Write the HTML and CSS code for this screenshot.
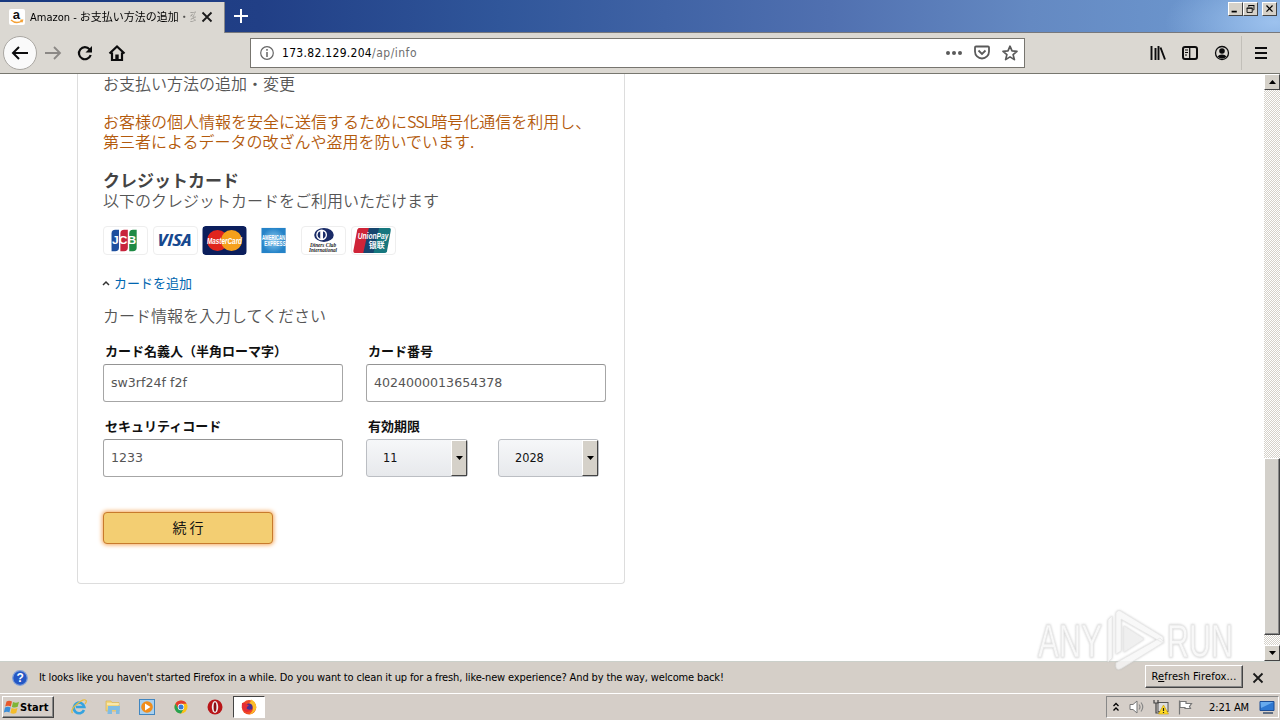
FILE: index.html
```html
<!DOCTYPE html>
<html lang="ja">
<head>
<meta charset="utf-8">
<title>Desktop</title>
<link rel="stylesheet" href="styles.css">
</head>
<body>
<div class="window">
  <header class="tabbar">
    <div class="tab">
      <svg class="fav" viewBox="0 0 16 16"><rect width="16" height="16" rx="2" fill="#fff"/><text x="3.8" y="9.8" font-size="13" font-weight="bold" font-family="Liberation Sans, sans-serif" fill="#111">a</text><path d="M2 11Q7 15.500 13 12M11.300 11.300l2.200-.1-.6 2" fill="none" stroke="#f4a135" stroke-width="1.400"/></svg>
      <span class="tab-title">Amazon - お支払い方法の追加・変</span>
      <svg class="tab-close" viewBox="0 0 12 12"><path d="M1.500 1.500l9 9M10.500 1.500l-9 9" stroke="#1a1a1a" stroke-width="1.800"/></svg>
    </div>
    <svg class="newtab" viewBox="0 0 16 16"><path d="M8 1v14M1 8h14" stroke="#fff" stroke-width="2"/></svg>
    <div class="controls">
      <svg class="ctl" viewBox="0 0 15 13"><path d="M3 9.500h6" stroke="#000" stroke-width="2"/></svg>
      <svg class="ctl" viewBox="0 0 15 13"><path d="M5.500 4V2.500h6v5H10M5 2.500h7M3.500 5.500h6v5h-6zM3 5.500h7" fill="none" stroke="#000"/></svg>
      <svg class="ctl ctl-close" viewBox="0 0 15 13"><path d="M4 2.500l7 7M11 2.500l-7 7" stroke="#000" stroke-width="1.500"/></svg>
    </div>
  </header>
  <nav class="toolbar">
    <div class="nav">
      <div class="back"><svg class="i18" viewBox="0 0 18 18"><path d="M17 9H2M8 3L2 9l6 6" fill="none" stroke="#0c0c0d" stroke-width="2"/></svg></div>
      <svg class="i18" viewBox="0 0 18 18"><path d="M1 9h15M10 3l6 6-6 6" fill="none" stroke="#8b8885" stroke-width="1.800"/></svg>
      <svg class="i18" viewBox="0 0 18 18"><path d="M13.600 5.400A6 6 0 1 0 14.700 11" fill="none" stroke="#0c0c0d" stroke-width="2.200"/><path d="M16 2v6.500H9.500z" fill="#0c0c0d"/></svg>
      <svg class="i18" viewBox="0 0 18 18"><path d="M1.500 9.500L9 2.500l7.500 7M4 8.500V16h10V8.500" fill="none" stroke="#0c0c0d" stroke-width="2.200"/><path d="M7.300 16v-5.500h3.400V16z" fill="#0c0c0d"/></svg>
    </div>
    <div class="url">
      <svg class="i14" viewBox="0 0 14 14"><circle cx="7" cy="7" r="6.300" fill="none" stroke="#666" stroke-width="1.200"/><path d="M7 6v5M7 3v1.700" stroke="#666" stroke-width="1.500"/></svg>
      <span class="addr">173.82.129.204<span class="path">/ap/info</span></span>
      <svg class="dots" viewBox="0 0 16 16"><g fill="#5a5a5a"><circle cx="2" cy="8" r="2"/><circle cx="8" cy="8" r="2"/><circle cx="14" cy="8" r="2"/></g></svg>
      <svg class="i16" viewBox="0 0 16 16"><path d="M2 1.500h12q1 0 1 1v4a7 7 0 0 1-14 0v-4q0-1 1-1z" fill="none" stroke="#5a5a5a" stroke-width="1.800"/><path d="M4.500 5.500L8 9l3.500-3.500" fill="none" stroke="#5a5a5a" stroke-width="1.800"/></svg>
      <svg class="i16" viewBox="0 0 16 16"><path d="M8 1.200l2 4.700 5 .4-3.900 3.300 1.300 5L8 11.900l-4.400 2.700 1.300-5L1 6.300l5-.4z" fill="none" stroke="#5a5a5a" stroke-width="1.700" stroke-linejoin="round"/></svg>
    </div>
    <div class="tools">
      <svg class="i16" viewBox="0 0 16 16"><path d="M1.500 1v14M5.500 3v12M8.500 1v14M10.500 2.500l4.500 12" stroke="#0c0c0d" stroke-width="1.900"/></svg>
      <svg class="i16" viewBox="0 0 16 16"><rect x="1" y="2" width="14" height="12" rx="2" fill="none" stroke="#0c0c0d" stroke-width="2"/><path d="M7.700 2v12" stroke="#0c0c0d" stroke-width="1.300"/><path d="M3 5h3M3 7.500h3M3 10h2" stroke="#0c0c0d"/></svg>
      <svg class="i16" viewBox="0 0 16 16"><circle cx="8" cy="8" r="6.500" fill="none" stroke="#0c0c0d" stroke-width="1.300"/><circle cx="8" cy="6" r="2.800" fill="#0c0c0d"/><path d="M3.500 11.500Q5 9.500 8 9.500t4.500 2Q11 13.500 8 13.500t-4.500-2z" fill="#0c0c0d"/></svg>
      <div class="menu"><svg class="i14" viewBox="0 0 14 14"><path d="M1 2h12M1 7h12M1 12h12" stroke="#0c0c0d" stroke-width="2"/></svg></div>
    </div>
  </nav>
  <div class="view">
    <main class="page">
      <section class="card">
        <div class="line">お支払い方法の追加・変更</div>
        <p class="secure">お客様の個人情報を安全に送信するために<span class="ssl">SSL</span>暗号化通信を利用し、<br>第三者によるデータの改ざんや盗用を防いでいます.</p>
        <h3 class="title">クレジットカード</h3>
        <div class="line">以下のクレジットカードをご利用いただけます</div>
        <div class="brands">
          <svg class="brand" viewBox="0 0 44 29"><path d="M7 7q0-4 4-4h4v19q0 4-4 4H7z" fill="#1d4f9e"/><path d="M16.500 7q0-4 4-4h4v19q0 4-4 4h-4z" fill="#c8243c"/><path d="M26 7q0-4 4-4h4v19q0 4-4 4h-4z" fill="#1e8a44"/><text x="7.500" y="18.500" textLength="26" lengthAdjust="spacingAndGlyphs" font-family="Liberation Sans, sans-serif" font-size="11" font-weight="bold" fill="#fff">JCB</text></svg>
          <svg class="brand" viewBox="0 0 44 29"><text x="2.500" y="20.500" textLength="37" lengthAdjust="spacingAndGlyphs" font-family="Open Sans, sans-serif" font-size="17" font-weight="bold" font-style="italic" fill="#17488f">VISA</text></svg>
          <svg class="brand" viewBox="0 0 44 29"><rect width="44" height="29" rx="3" fill="#0b1e5c"/><circle cx="15" cy="14.500" r="10.500" fill="#e0251e"/><circle cx="29" cy="14.500" r="10.500" fill="#f5a01c"/><text x="4.500" y="18" textLength="35" lengthAdjust="spacingAndGlyphs" font-family="Liberation Sans, sans-serif" font-size="9" font-weight="bold" font-style="italic" fill="#fff">MasterCard</text></svg>
          <svg class="brand plain" viewBox="0 0 44 29"><defs><radialGradient id="ax"><stop offset="0" stop-color="#8fcdf0"/><stop offset="1" stop-color="#2583c8"/></radialGradient></defs><rect x="8" y="1" width="26" height="27" fill="url(#ax)"/><g font-family="Liberation Sans, sans-serif" font-size="7" font-weight="bold" fill="#fff"><text x="8.500" y="13.500" textLength="25" lengthAdjust="spacingAndGlyphs">AMERICAN</text><text x="11" y="20" textLength="23" lengthAdjust="spacingAndGlyphs">EXPRESS</text></g></svg>
          <svg class="brand" viewBox="0 0 44 29"><ellipse cx="22.500" cy="8.500" rx="10.500" ry="7.500" fill="#1a2c68"/><circle cx="20" cy="8.500" r="5.800" fill="#fff"/><path d="M18.500 4.500v8a4.200 4.200 0 0 1 0-8M21.500 4.500v8a4.200 4.200 0 0 0 0-8" fill="#1a2c68"/><g font-family="Liberation Serif, serif" font-size="7.500" font-weight="bold" font-style="italic" fill="#222"><text x="7.500" y="21.500" textLength="28" lengthAdjust="spacingAndGlyphs">Diners Club</text><text x="6.500" y="26.800" textLength="30" lengthAdjust="spacingAndGlyphs" font-size="6">International</text></g></svg>
          <svg class="brand" viewBox="0 0 44 29"><path d="M6 1h12l-6 27H2q-2 0-1.500-3l4-22z" fill="#cf2438"/><path d="M17 1h12l-6 27H11z" fill="#17456e"/><path d="M28 1h11q2 0 1.500 3l-4 22q-.5 2-3 2H22z" fill="#16777e"/><text x="5" y="13" textLength="33" lengthAdjust="spacingAndGlyphs" font-family="Liberation Sans, sans-serif" font-size="9" font-weight="bold" font-style="italic" fill="#fff">UnionPay</text><text x="17" y="23" font-family="Noto Sans CJK SC, sans-serif" font-size="8.500" font-weight="bold" fill="#fff">银联</text></svg>
        </div>
        <div class="addcard"><svg class="caret" viewBox="0 0 8 6"><path d="M1 5l3-3 3 3" fill="none" stroke="#333" stroke-width="1.500"/></svg><span class="link">カードを追加</span></div>
        <div class="line prompt">カード情報を入力してください</div>
        <div class="fields">
          <div class="field"><div class="label">カード名義人（半角ローマ字）</div><div class="box name">sw3rf24f f2f</div></div>
          <div class="field"><div class="label">カード番号</div><div class="box">4024000013654378</div></div>
          <div class="field"><div class="label">セキュリティコード</div><div class="box">1233</div></div>
          <div class="field"><div class="label">有効期限</div>
            <div class="selects">
              <div class="select">11<span class="drop"><svg class="tri" viewBox="0 0 7 4"><path d="M0 0h7L3.500 4z"/></svg></span></div>
              <div class="select">2028<span class="drop"><svg class="tri" viewBox="0 0 7 4"><path d="M0 0h7L3.500 4z"/></svg></span></div>
            </div>
          </div>
        </div>
        <div class="go">続 行</div>
      </section>
    </main>
    <div class="scroll">
      <div class="sbtn"><svg class="tri" viewBox="0 0 7 4"><path d="M0 4h7L3.500 0z"/></svg></div>
      <div class="thumb"></div>
      <div class="sbtn"><svg class="tri" viewBox="0 0 7 4"><path d="M0 0h7L3.500 4z"/></svg></div>
    </div>
  </div>
  <div class="notice">
    <svg class="i16" viewBox="0 0 16 16"><circle cx="8" cy="8" r="7.300" fill="#2457c5" stroke="#7f9fd8" stroke-width="1.200"/><text x="4.600" y="12.300" font-family="Liberation Sans, sans-serif" font-size="12" font-weight="bold" fill="#fff">?</text></svg>
    <span class="msg">It looks like you haven't started Firefox in a while. Do you want to clean it up for a fresh, like-new experience? And by the way, welcome back!</span>
    <div class="refresh"><span class="rlabel">R<u>e</u>fresh Firefox...</span></div>
    <svg class="nclose" viewBox="0 0 12 12"><path d="M1.500 1.500l9 9M10.500 1.500l-9 9" stroke="#1a1a1a" stroke-width="1.800"/></svg>
  </div>
  <footer class="taskbar">
    <div class="start">
      <svg class="i16" viewBox="0 0 16 16"><path d="M2.500 2.500Q5 .8 8 2.500L6.800 7.500Q4 6 1.200 7.500z" fill="#e8592b"/><path d="M9 3q3 1.500 6-.2l-1.300 5Q11 9.200 7.900 7.900z" fill="#7fb537"/><path d="M1 8.500q3-1.500 5.600 0L5.400 13.500Q3 12-.2 13.500z" fill="#3c8ed8"/><path d="M7.600 9q3 1.400 5.900 0l-1.300 5q-3 1.400-5.800 0z" fill="#f4bc2a"/></svg>
      <span class="slabel">Start</span>
    </div>
    <div class="quick">
      <svg class="i16" viewBox="0 0 16 16"><path d="M13 11a5.300 5.300 0 1 1 .3-3H5" fill="none" stroke="#35a3df" stroke-width="2.600"/><path d="M1.500 14Q-1 11 6 5t9-3.500q1 1-1 3.500" fill="none" stroke="#e8bc3c" stroke-width="1.200"/></svg>
      <svg class="i16" viewBox="0 0 16 16"><path d="M1 2h5l1 1.500h7V12H1z" fill="#f2d67c" stroke="#d6b04a" stroke-width=".6"/><path d="M3 7h12l-.5 8H11v-4H7v4H2.500z" fill="#80bce3"/><path d="M2 5h12" stroke="#fff8d8"/></svg>
      <svg class="i16" viewBox="0 0 16 16"><rect x=".5" y=".5" width="15" height="15" fill="#a9d0ee" stroke="#4186c0"/><circle cx="8" cy="8" r="5.800" fill="#f18d1a"/><path d="M6 4.500l5.500 3.500L6 11.500z" fill="#fff"/></svg>
      <svg class="i16" viewBox="0 0 16 16"><circle cx="8" cy="8" r="6.500" fill="#fbc116"/><path d="M2.400 4.700A6.500 6.500 0 0 1 13.600 4.700H8L5.500 10z" fill="#e33b2e"/><path d="M2.400 4.700A6.500 6.500 0 0 0 8 14.500L10.500 10H5.500z" fill="#27a152"/><circle cx="8" cy="8" r="3.200" fill="#fff"/><circle cx="8" cy="8" r="2.500" fill="#377bd6"/></svg>
      <svg class="i16" viewBox="0 0 16 16"><circle cx="8" cy="8" r="7.500" fill="#b91518"/><ellipse cx="8" cy="8" rx="3.200" ry="6" fill="#eee"/><ellipse cx="8" cy="8" rx="1.400" ry="4.800" fill="#8c0e13"/></svg>
    </div>
    <div class="running"><svg class="i16" viewBox="0 0 16 16"><circle cx="8" cy="8.300" r="7.200" fill="#f04a26"/><path d="M10 .5q6 3 5.200 9Q13 15 8 15.500q4-3 4-6T8 4q2-1 2-3.500z" fill="#fbbc28"/><circle cx="8" cy="8" r="3.500" fill="#4a2d91"/><path d="M1 4q3-1 5 1.500l2 .7q-2 1-2.500 3 2 2.500 5 .8-2 4.500-6.500 2.500Q0 10 1 4z" fill="#e52c34"/></svg></div>
    <div class="tray">
      <svg class="chev" viewBox="0 0 8 10"><path d="M1.500 4L4 1.500 6.500 4M1.500 8.500L4 6l2.500 2.500" fill="none" stroke="#000" stroke-width="1.300"/></svg>
      <svg class="i16" viewBox="0 0 16 16"><path d="M1 5.500h3L8 2v12L4 10.500H1z" fill="#fff" stroke="#777"/><path d="M10 5.500q2 2.500 0 5M12 3.500q3.500 4.500 0 9" fill="none" stroke="#888" stroke-width="1.200"/></svg>
      <svg class="i16" viewBox="0 0 16 16"><rect x="5" y="3.500" width="10" height="9" fill="#ddd" stroke="#555"/><path d="M1 1v3h4V1M3 4v10h4" fill="none" stroke="#444" stroke-width="1.200"/><path d="M10.500 6l5 9h-10z" fill="#ffdb24" stroke="#c79a00" stroke-width=".6"/><path d="M10.500 9v3M10.500 13v1" stroke="#222" stroke-width="1.200"/></svg>
      <svg class="i16" viewBox="0 0 16 16"><path d="M2.500 1.500v14M3 2.500h6v2h5.500l-2 3 1 2H8v-1H3z" fill="#fff" stroke="#777" stroke-width="1.200"/></svg>
      <span class="clock">2:21 AM</span>
      <svg class="i16" viewBox="0 0 16 16"><path d="M1 2.500h14v9H1z" fill="#2e78d2" stroke="#1c4c94"/><path d="M1.500 3h13L2 9z" fill="#67aaee"/><path d="M4 14h10" stroke="#394e6c" stroke-width="1.500"/></svg>
    </div>
  </footer>
  <svg class="watermark" viewBox="0 0 200 66"><g fill="#fff" fill-opacity=".85" stroke="#e4e4e4" stroke-width=".8"><g font-family="Liberation Sans, sans-serif" font-size="46"><text x="2" y="49" textLength="64" lengthAdjust="spacingAndGlyphs">ANY</text><text x="131" y="49" textLength="66" lengthAdjust="spacingAndGlyphs">RUN</text></g><path d="M72 12l4-4v42l-4 4zM80 5q2-4 6-1l41 25v6L85 11v32l-5 3zM80 55l44-25 4 4-42 26q-5 3-6-1z"/><path d="M88 18l20 13-20 13z" fill="#f3f3f3"/></g></svg>
</div>
</body>
</html>
```

FILE: styles.css
```css
* { box-sizing: border-box; }
body { margin: 0; background: #fff; }
svg { display: block; flex: none; }
.window { position: relative; width: 1280px; height: 720px; overflow: hidden; display: flex; flex-direction: column; font-family: "DejaVu Sans Condensed", "DejaVu Sans", "Noto Sans CJK JP", sans-serif; font-stretch: condensed; font-size: 11px; color: #000; }
.i18 { width: 18px; height: 18px; }
.i16 { width: 16px; height: 16px; }
.i14 { width: 14px; height: 14px; }

.tabbar { height: 33px; flex: none; display: flex; border-bottom: 1px solid #77787c; background: radial-gradient(ellipse 110px 50px at 1275px 22px, #9dc2ee, transparent), linear-gradient(90deg, #18397f 0, #213f86 260px, #30569a 500px, #5070b0 830px, #6489c2 1030px, #6f9bd2 1280px); }
.tab { width: 225px; height: 31px; margin-top: 2px; padding: 0 11px 0 9px; display: flex; align-items: center; background: #dbd8d2; border-right: 1px solid #8a8a8a; box-shadow: 0 1px #dbd8d2; }
.fav { width: 16px; height: 16px; margin-top: -2px; }
.tab-title { width: 166px; height: 20px; line-height: 19px; margin-left: 5px; overflow: hidden; white-space: nowrap; font-size: 11px; -webkit-mask-image: linear-gradient(90deg, #000 145px, transparent 170px); mask-image: linear-gradient(90deg, #000 145px, transparent 170px); }
.tab-close { width: 12px; height: 12px; margin: -2px 0 0 5px; }
.newtab { width: 16px; height: 16px; margin: 8px 0 0 8px; }
.controls { display: flex; margin: 2px 3px 0 auto; }
.ctl { width: 15px; height: 14px; background: #d5d1c9; border: 1px solid; border-color: #fff #444 #444 #fff; }
.ctl-close { margin-left: 4px; }

.toolbar { height: 41px; flex: none; display: flex; align-items: center; background: #dbd8d2; border-bottom: 1px solid #77776f; }
.nav { width: 250px; padding-left: 3px; display: flex; align-items: center; gap: 14px; }
.back { width: 34px; height: 34px; margin-right: -7px; border: 1px solid #aaa7a2; border-radius: 50%; background: #fafafa; display: flex; align-items: center; justify-content: center; }
.url { width: 775px; height: 30px; padding: 0 6px 0 9px; border: 1px solid #77756f; background: #fff; display: flex; align-items: center; }
.addr { margin: 0 auto 0 8px; font-size: 12px; letter-spacing: .3px; }
.path { color: #6e6e6e; letter-spacing: .5px; }
.dots { width: 16px; height: 16px; }
.dots + .i16, .i16 + .i16 { margin-left: 12px; }
.tools { margin-left: auto; display: flex; align-items: center; }
.tools .i16 + .i16 { margin-left: 16px; }
.menu { height: 34px; margin-left: 11px; padding: 0 12px 0 12px; border-left: 1px solid #c2bfb9; display: flex; align-items: center; }

.view { height: 587px; flex: none; display: flex; }
.page { width: 1264px; padding-left: 77px; background: #fff; }
.card { display: flow-root; width: 548px; height: 510px; padding-left: 25px; border: 1px solid #ddd; border-top: 0; border-radius: 0 0 4px 4px; color: #555; font-family: "DejaVu Sans", "Noto Sans CJK JP", sans-serif; }
.line, .secure { font: 350 16px/20px "Noto Sans CJK JP", sans-serif; white-space: nowrap; }
.card > .line:first-child { margin-top: -1px; }
.secure { margin: 18px 0; color: #b35a0c; }
.ssl { letter-spacing: -1px; }
.title { margin: 0; font: bold 17px/21px "Noto Sans CJK JP", sans-serif; color: #444; }
.brands { display: flex; gap: 4.6px; margin-top: 16px; }
.brand { width: 45px; height: 29px; border: 1px solid #eee; border-radius: 4px; }
.brands .brand:nth-child(3) { border: 0; }
.brands .plain { border-color: #fff; }
.addcard { margin-top: 18px; height: 20px; display: flex; align-items: center; gap: 4px; }
.caret { width: 8px; height: 6px; margin-left: -1px; }
.link { font: 13px/20px "Noto Sans CJK JP", sans-serif; color: #0066b0; }
.prompt { margin-top: 12px; }
.fields { margin-top: 16px; display: grid; grid-template-columns: 240px 240px; column-gap: 23px; row-gap: 14px; }
.label { margin: 0 0 3px 2px; font: bold 13px/20px "Noto Sans CJK JP", sans-serif; color: #111; white-space: nowrap; }
.box { height: 38px; padding: 0 7px; border: 1px solid #a6a6a6; border-top-color: #949494; border-radius: 3px; font-size: 12.6px; line-height: 35px; font-stretch: normal; }
.name { letter-spacing: 0; }
.selects { display: flex; gap: 30px; }
.select { width: 102px; height: 38px; padding: 0 0 0 16px; border: 1px solid #bbbec3; border-radius: 3px; background: linear-gradient(#f6f7f9, #e7e9ec); color: #111; font: 12.6px/35px "DejaVu Sans Condensed", "DejaVu Sans", sans-serif; display: flex; justify-content: space-between; }
.select + .select { width: 101px; }
.drop { width: 16px; height: 36px; background: #d5d1c9; border: 1px solid; border-color: #fff #444 #444 #fff; display: flex; align-items: center; justify-content: center; }
.tri { width: 7px; height: 4px; }
.go { width: 170px; height: 32px; margin: 35px 0 0; border: 1px solid #c87a2c; border-radius: 4px; background: #f3ce72; box-shadow: 0 0 4px 1px #f4a95c; color: #111; text-align: center; font: 14px/29px "Noto Sans CJK JP", sans-serif; }

.scroll { width: 16px; display: flex; flex-direction: column; background: repeating-conic-gradient(#d5d1c9 0 25%, #fff 0 50%) 0 0 / 2px 2px; }
.sbtn { width: 16px; height: 16px; background: #d5d1c9; border: 1px solid; border-color: #fff #444 #444 #fff; display: flex; align-items: center; justify-content: center; }
.thumb { height: 177px; margin: 368px 0 10px; background: #d3d0ca; border: 1px solid; border-color: #fff #444 #444 #fff; box-shadow: inset -1px -1px #888; }

.notice { height: 32px; flex: none; display: flex; align-items: center; padding: 0 16px 0 12px; background: #d5cfc8; border-top: 1px solid #cbd0ca; }
.msg { margin-left: 11px; white-space: nowrap; font-size: 11px; letter-spacing: -.14px; }
.refresh { width: 98px; height: 23px; margin: -3px 9px 0 auto; border: 1px solid; border-color: #fff #444 #444 #fff; box-shadow: inset -1px -1px #888; text-align: center; line-height: 21px; letter-spacing: .13px; white-space: nowrap; }
.nclose { width: 12px; height: 12px; }

.taskbar { height: 27px; flex: none; display: flex; align-items: center; background: #d5cec8; border-top: 1px solid #fff; }
.start { width: 52px; height: 22px; margin-left: 2px; padding-left: 1px; border: 1px solid; border-color: #fff #444 #444 #fff; box-shadow: inset -1px -1px #888; display: flex; align-items: center; }
.slabel { font-weight: bold; font-size: 11px; letter-spacing: .1px; }
.quick { display: flex; margin-left: 17px; }
.quick .i16 + .i16 { margin-left: 18px; }
.running { width: 32px; height: 22px; margin-left: 10px; border: 1px solid; border-color: #444 #fff #fff #444; background: #fff; display: flex; align-items: center; justify-content: center; }
.tray { width: 173px; height: 22px; margin: 0 1px 0 auto; padding: 0 3px 0 5px; border: 1px solid; border-color: #888 #fff #fff #888; display: flex; align-items: center; white-space: nowrap; }
.chev { width: 8px; height: 10px; margin-right: 9px; }
.tray .i16 + .i16 { margin-left: 8px; }
.clock { margin: 0 10px 0 auto; letter-spacing: -.1px; }
.watermark { position: absolute; left: 1036px; top: 608px; width: 200px; height: 66px; opacity: .85; filter: drop-shadow(0 0 1px #bbb); }
```
